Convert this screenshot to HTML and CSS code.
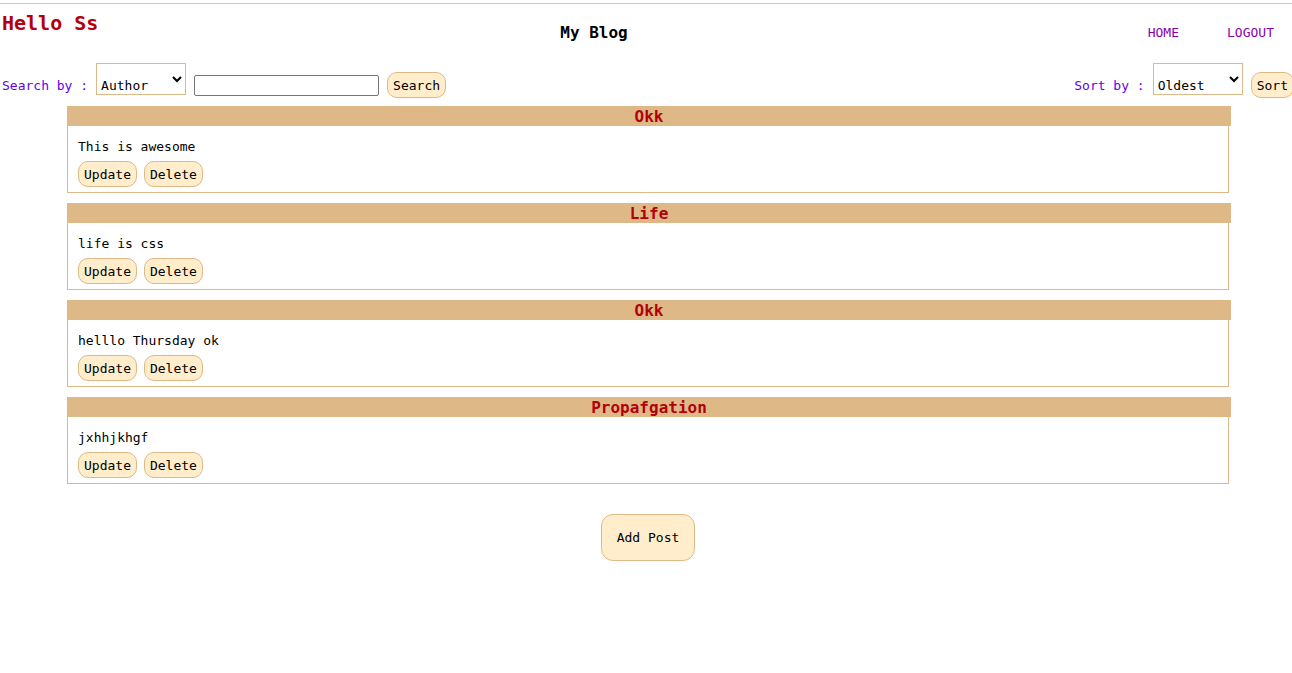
FILE: index.html
```html
<!DOCTYPE html>
<html lang="en">
<head>
<meta charset="utf-8">
<title>My Blog</title>
<link rel="stylesheet" href="styles.css">
</head>
<body>
<div class="topline"></div>
<header class="header">
  <div class="hello">Hello Ss</div>
  <div class="brand">My Blog</div>
  <nav class="nav">
    <a class="nav-link" href="#">HOME</a>
    <a class="nav-link" href="#">LOGOUT</a>
  </nav>
</header>
<div class="toolbar">
  <div class="group">
    <span class="label">Search by :</span>
    <select class="select"><option>Author</option><option>Title</option></select>
    <input class="input" type="text">
    <button class="btn">Search</button>
  </div>
  <div class="group group-right">
    <span class="label">Sort by :</span>
    <select class="select"><option>Oldest</option><option>Newest</option></select>
    <button class="btn">Sort</button>
  </div>
</div>
<main class="posts">
  <article class="post">
    <h2 class="post-title">Okk</h2>
    <div class="post-body">
      <p class="post-text">This is awesome</p>
      <div class="actions"><button class="btn">Update</button><button class="btn">Delete</button></div>
    </div>
  </article>
  <article class="post">
    <h2 class="post-title">Life</h2>
    <div class="post-body">
      <p class="post-text">life is css</p>
      <div class="actions"><button class="btn">Update</button><button class="btn">Delete</button></div>
    </div>
  </article>
  <article class="post">
    <h2 class="post-title">Okk</h2>
    <div class="post-body">
      <p class="post-text">helllo Thursday ok</p>
      <div class="actions"><button class="btn">Update</button><button class="btn">Delete</button></div>
    </div>
  </article>
  <article class="post">
    <h2 class="post-title">Propafgation</h2>
    <div class="post-body">
      <p class="post-text">jxhhjkhgf</p>
      <div class="actions"><button class="btn">Update</button><button class="btn">Delete</button></div>
    </div>
  </article>
</main>
<div class="add-wrap">
  <button class="btn btn-add">Add Post</button>
</div>
</body>
</html>
```

FILE: styles.css
```css
html {
  overflow-x: hidden;
}
body {
  margin: 0;
  font-family: "DejaVu Sans Mono", monospace;
  font-size: 13px;
  color: #000;
  background: #fff;
}
.topline {
  margin-top: 3px;
  border-top: 1px solid #c8c8c8;
}
.header {
  display: flex;
  justify-content: space-between;
  align-items: flex-start;
  height: 59px;
  padding-left: 2px;
}
.hello {
  margin-top: 7px;
  font-size: 20px;
  font-weight: bold;
  color: #b3000c;
}
.brand {
  margin-top: 19px;
  margin-left: 2px;
  font-size: 16px;
  font-weight: bold;
}
.nav {
  display: flex;
  gap: 48px;
  margin-top: 21px;
  padding: 0 18px 0 60px;
}
.nav-link {
  color: #8a00a8;
  text-decoration: none;
}
.toolbar {
  display: flex;
  justify-content: space-between;
  align-items: flex-start;
  height: 33px;
  padding-left: 2px;
  margin-right: -2px;
}
.group {
  display: flex;
  align-items: baseline;
  gap: 8px;
}
.label {
  color: #6200f0;
}
.select {
  width: 90px;
  height: 32px;
  box-sizing: border-box;
  border: 1px solid #deb887;
  border-radius: 0;
  background: #fff;
  font-family: "DejaVu Sans Mono", monospace;
  font-size: 13px;
  color: #000;
  padding: 12px 0 0 0;
}
.input {
  width: 185px;
  height: 21px;
  box-sizing: border-box;
  border: 1px solid #767676;
  border-radius: 2px;
  padding: 1px 2px;
  font-family: "DejaVu Sans Mono", monospace;
  font-size: 13px;
}
.btn {
  height: 26px;
  box-sizing: border-box;
  padding: 0 5px;
  border: 1px solid #deb887;
  border-radius: 10px;
  background: #ffedcb;
  font-family: "DejaVu Sans Mono", monospace;
  font-size: 13px;
  color: #000;
  line-height: 15px;
}
.posts {
  margin: 0 63px 0 67px;
  padding-top: 10px;
}
.post {
  margin-bottom: 10px;
}
.post-title {
  margin: 0 -2px 0 0;
  height: 20px;
  background: #deb887;
  color: #b3000c;
  font-size: 16px;
  font-weight: bold;
  line-height: 21px;
  text-align: center;
}
.post-body {
  border: 1px solid #deb887;
  border-top: none;
  padding: 13px 10px 5px;
}
.post-text {
  margin: 0 0 7px;
  line-height: 15px;
}
.actions {
  display: flex;
  gap: 7px;
}
.add-wrap {
  display: flex;
  justify-content: center;
  padding: 20px 0 0 4px;
}
.btn-add {
  height: 47px;
  padding: 0 15px;
  border-radius: 12px;
}
```
